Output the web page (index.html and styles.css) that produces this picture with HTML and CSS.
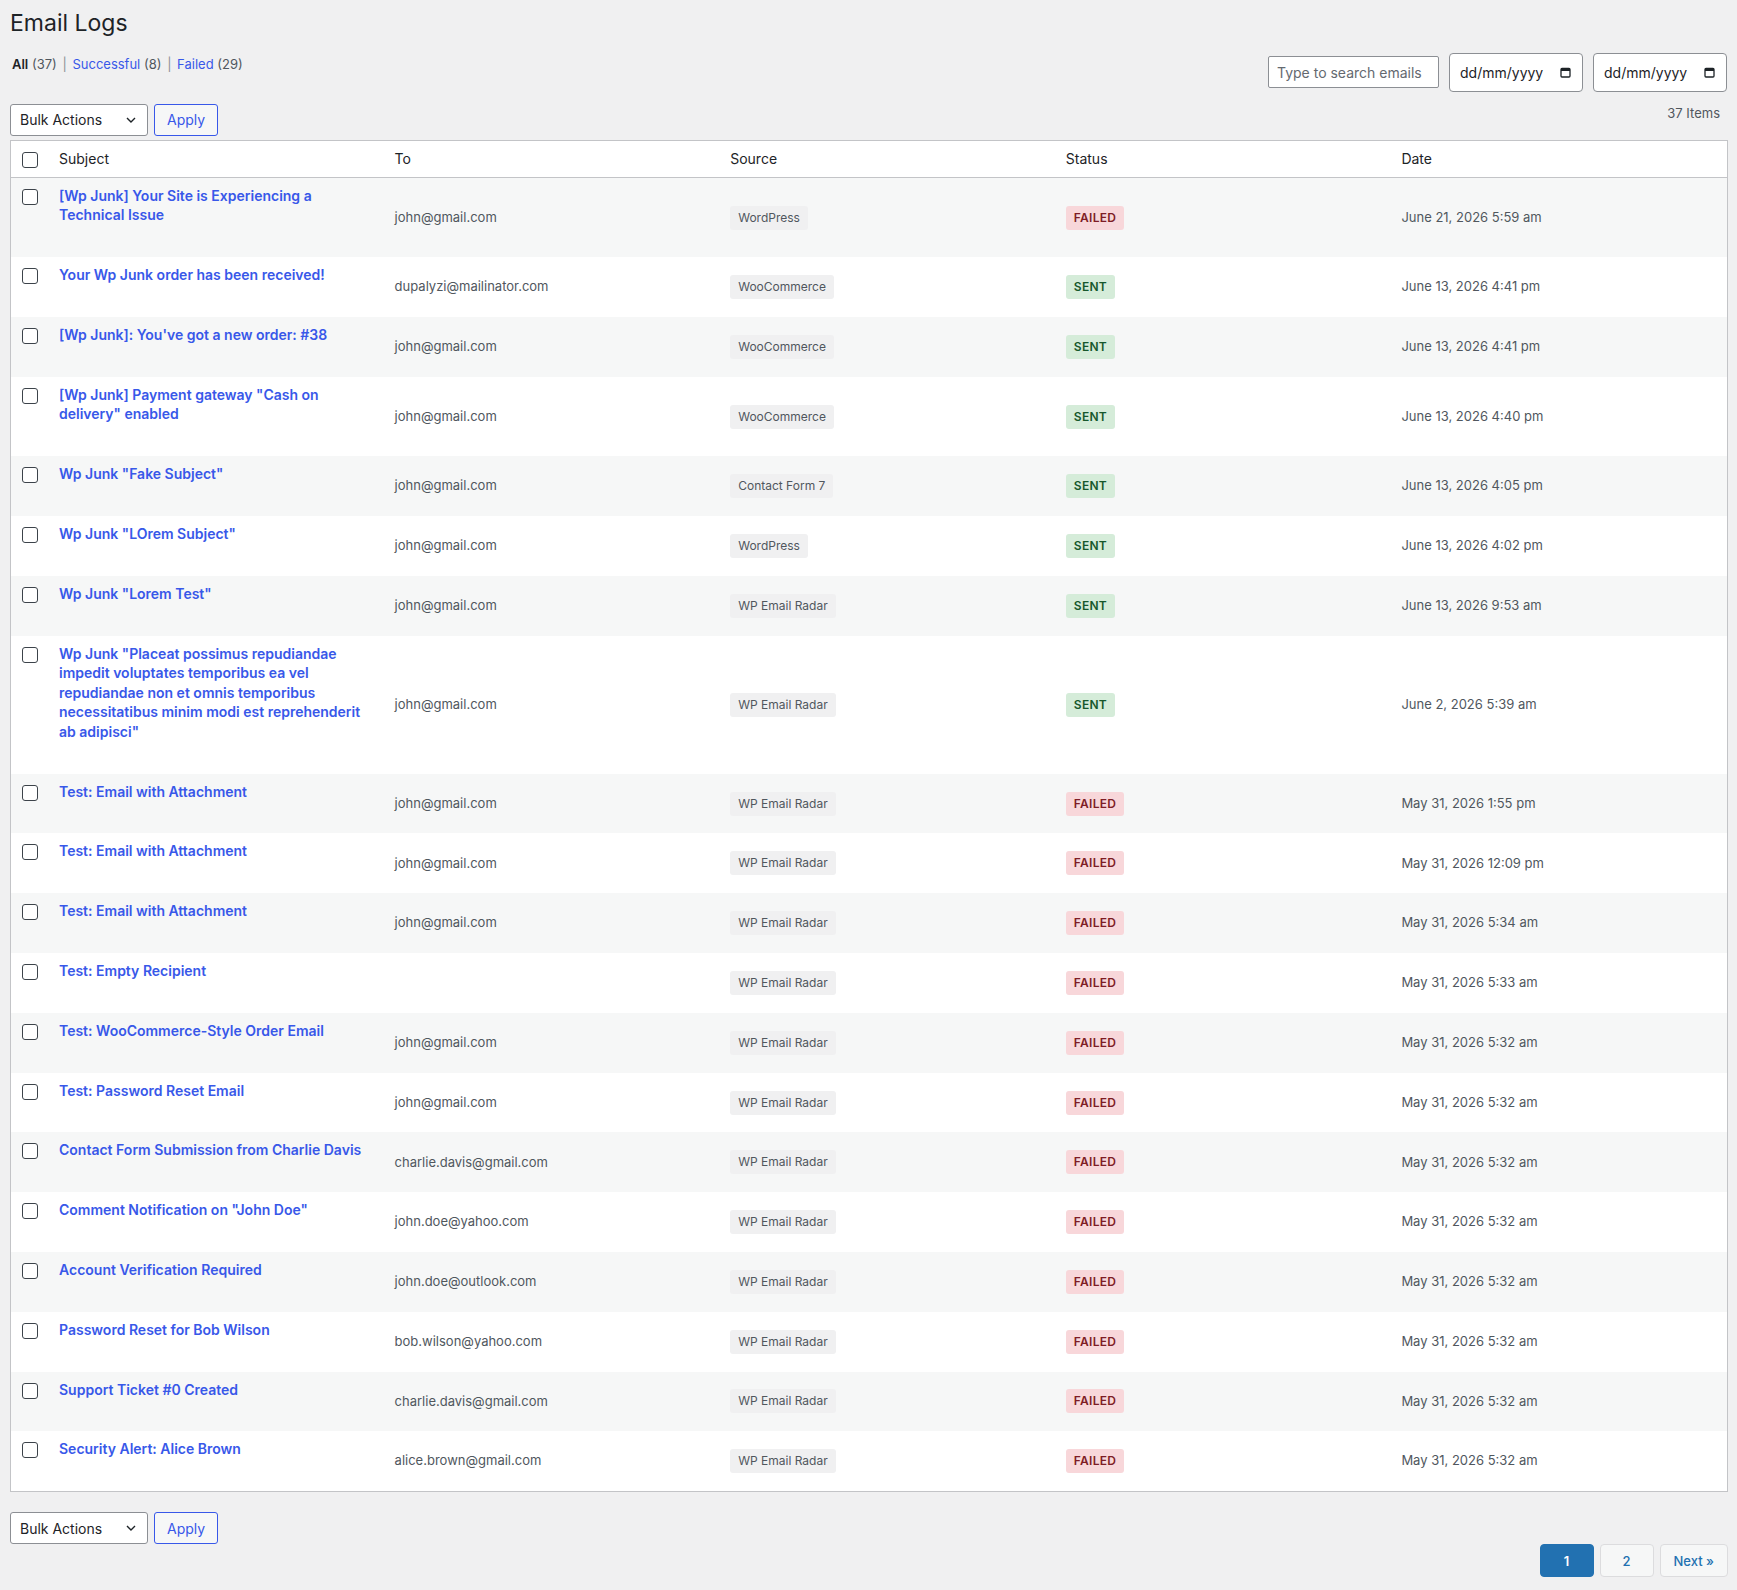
FILE: index.html
```html
<!DOCTYPE html>
<html lang="en">
<head>
    <meta charset="UTF-8">
    <meta name="viewport" content="width=device-width, initial-scale=1.0">
    <title>Email Logs</title>
    <link rel="stylesheet" href="styles.css">
</head>
<body>
    <div class="wrap">
        <h1>Email Logs</h1>

        <div class="top-bar">
            <div class="filters">
                <a class="current" href="#">All</a> <span class="count">(37)</span> <span class="sep">|</span>
                <a href="#">Successful</a> <span class="count">(8)</span> <span class="sep">|</span>
                <a href="#">Failed</a> <span class="count">(29)</span>
            </div>
            <div class="search-box">
                <input type="text" class="search-input" placeholder="Type to search emails">
                <div class="date-field">
                    <span>dd/mm/yyyy</span>
                    <svg width="11" height="11" viewBox="0 0 11 11"><rect x="1" y="1.5" width="9" height="8.5" rx="1" fill="none" stroke="#1d2327" stroke-width="1.3"/><rect x="1" y="1.5" width="9" height="2.5" fill="#1d2327"/></svg>
                </div>
                <div class="date-field">
                    <span>dd/mm/yyyy</span>
                    <svg width="11" height="11" viewBox="0 0 11 11"><rect x="1" y="1.5" width="9" height="8.5" rx="1" fill="none" stroke="#1d2327" stroke-width="1.3"/><rect x="1" y="1.5" width="9" height="2.5" fill="#1d2327"/></svg>
                </div>
            </div>
        </div>

        <div class="tablenav top">
            <div class="actions">
                <div class="bulk-select">
                    <span>Bulk Actions</span>
                    <svg width="10" height="6" viewBox="0 0 10 6"><path d="M1 1l4 4 4-4" fill="none" stroke="#1d2327" stroke-width="1.4"/></svg>
                </div>
                <button class="button">Apply</button>
            </div>
            <div class="displaying-num">37 Items</div>
        </div>

        <table class="logs">
            <thead>
                <tr>
                    <th class="check-column"><input type="checkbox"></th>
                    <th>Subject</th>
                    <th>To</th>
                    <th>Source</th>
                    <th>Status</th>
                    <th>Date</th>
                </tr>
            </thead>
            <tbody>
                <tr>
                    <td class="check-column"><input type="checkbox"></td>
                    <td class="subject"><a href="#">[Wp Junk] Your Site is Experiencing a Technical Issue</a></td>
                    <td>john@gmail.com</td>
                    <td><span class="source">WordPress</span></td>
                    <td><span class="status failed">Failed</span></td>
                    <td>June 21, 2026 5:59 am</td>
                </tr>
                <tr>
                    <td class="check-column"><input type="checkbox"></td>
                    <td class="subject"><a href="#">Your Wp Junk order has been received!</a></td>
                    <td>dupalyzi@mailinator.com</td>
                    <td><span class="source">WooCommerce</span></td>
                    <td><span class="status sent">Sent</span></td>
                    <td>June 13, 2026 4:41 pm</td>
                </tr>
                <tr>
                    <td class="check-column"><input type="checkbox"></td>
                    <td class="subject"><a href="#">[Wp Junk]: You've got a new order: #38</a></td>
                    <td>john@gmail.com</td>
                    <td><span class="source">WooCommerce</span></td>
                    <td><span class="status sent">Sent</span></td>
                    <td>June 13, 2026 4:41 pm</td>
                </tr>
                <tr>
                    <td class="check-column"><input type="checkbox"></td>
                    <td class="subject"><a href="#">[Wp Junk] Payment gateway "Cash on delivery" enabled</a></td>
                    <td>john@gmail.com</td>
                    <td><span class="source">WooCommerce</span></td>
                    <td><span class="status sent">Sent</span></td>
                    <td>June 13, 2026 4:40 pm</td>
                </tr>
                <tr>
                    <td class="check-column"><input type="checkbox"></td>
                    <td class="subject"><a href="#">Wp Junk "Fake Subject"</a></td>
                    <td>john@gmail.com</td>
                    <td><span class="source">Contact Form 7</span></td>
                    <td><span class="status sent">Sent</span></td>
                    <td>June 13, 2026 4:05 pm</td>
                </tr>
                <tr>
                    <td class="check-column"><input type="checkbox"></td>
                    <td class="subject"><a href="#">Wp Junk "LOrem Subject"</a></td>
                    <td>john@gmail.com</td>
                    <td><span class="source">WordPress</span></td>
                    <td><span class="status sent">Sent</span></td>
                    <td>June 13, 2026 4:02 pm</td>
                </tr>
                <tr>
                    <td class="check-column"><input type="checkbox"></td>
                    <td class="subject"><a href="#">Wp Junk "Lorem Test"</a></td>
                    <td>john@gmail.com</td>
                    <td><span class="source">WP Email Radar</span></td>
                    <td><span class="status sent">Sent</span></td>
                    <td>June 13, 2026 9:53 am</td>
                </tr>
                <tr>
                    <td class="check-column"><input type="checkbox"></td>
                    <td class="subject"><a href="#">Wp Junk "Placeat possimus repudiandae impedit voluptates temporibus ea vel repudiandae non et omnis temporibus necessitatibus minim modi est reprehenderit ab adipisci"</a></td>
                    <td>john@gmail.com</td>
                    <td><span class="source">WP Email Radar</span></td>
                    <td><span class="status sent">Sent</span></td>
                    <td>June 2, 2026 5:39 am</td>
                </tr>
                <tr>
                    <td class="check-column"><input type="checkbox"></td>
                    <td class="subject"><a href="#">Test: Email with Attachment</a></td>
                    <td>john@gmail.com</td>
                    <td><span class="source">WP Email Radar</span></td>
                    <td><span class="status failed">Failed</span></td>
                    <td>May 31, 2026 1:55 pm</td>
                </tr>
                <tr>
                    <td class="check-column"><input type="checkbox"></td>
                    <td class="subject"><a href="#">Test: Email with Attachment</a></td>
                    <td>john@gmail.com</td>
                    <td><span class="source">WP Email Radar</span></td>
                    <td><span class="status failed">Failed</span></td>
                    <td>May 31, 2026 12:09 pm</td>
                </tr>
                <tr>
                    <td class="check-column"><input type="checkbox"></td>
                    <td class="subject"><a href="#">Test: Email with Attachment</a></td>
                    <td>john@gmail.com</td>
                    <td><span class="source">WP Email Radar</span></td>
                    <td><span class="status failed">Failed</span></td>
                    <td>May 31, 2026 5:34 am</td>
                </tr>
                <tr>
                    <td class="check-column"><input type="checkbox"></td>
                    <td class="subject"><a href="#">Test: Empty Recipient</a></td>
                    <td></td>
                    <td><span class="source">WP Email Radar</span></td>
                    <td><span class="status failed">Failed</span></td>
                    <td>May 31, 2026 5:33 am</td>
                </tr>
                <tr>
                    <td class="check-column"><input type="checkbox"></td>
                    <td class="subject"><a href="#">Test: WooCommerce-Style Order Email</a></td>
                    <td>john@gmail.com</td>
                    <td><span class="source">WP Email Radar</span></td>
                    <td><span class="status failed">Failed</span></td>
                    <td>May 31, 2026 5:32 am</td>
                </tr>
                <tr>
                    <td class="check-column"><input type="checkbox"></td>
                    <td class="subject"><a href="#">Test: Password Reset Email</a></td>
                    <td>john@gmail.com</td>
                    <td><span class="source">WP Email Radar</span></td>
                    <td><span class="status failed">Failed</span></td>
                    <td>May 31, 2026 5:32 am</td>
                </tr>
                <tr>
                    <td class="check-column"><input type="checkbox"></td>
                    <td class="subject"><a href="#">Contact Form Submission from Charlie Davis</a></td>
                    <td>charlie.davis@gmail.com</td>
                    <td><span class="source">WP Email Radar</span></td>
                    <td><span class="status failed">Failed</span></td>
                    <td>May 31, 2026 5:32 am</td>
                </tr>
                <tr>
                    <td class="check-column"><input type="checkbox"></td>
                    <td class="subject"><a href="#">Comment Notification on "John Doe"</a></td>
                    <td>john.doe@yahoo.com</td>
                    <td><span class="source">WP Email Radar</span></td>
                    <td><span class="status failed">Failed</span></td>
                    <td>May 31, 2026 5:32 am</td>
                </tr>
                <tr>
                    <td class="check-column"><input type="checkbox"></td>
                    <td class="subject"><a href="#">Account Verification Required</a></td>
                    <td>john.doe@outlook.com</td>
                    <td><span class="source">WP Email Radar</span></td>
                    <td><span class="status failed">Failed</span></td>
                    <td>May 31, 2026 5:32 am</td>
                </tr>
                <tr>
                    <td class="check-column"><input type="checkbox"></td>
                    <td class="subject"><a href="#">Password Reset for Bob Wilson</a></td>
                    <td>bob.wilson@yahoo.com</td>
                    <td><span class="source">WP Email Radar</span></td>
                    <td><span class="status failed">Failed</span></td>
                    <td>May 31, 2026 5:32 am</td>
                </tr>
                <tr>
                    <td class="check-column"><input type="checkbox"></td>
                    <td class="subject"><a href="#">Support Ticket #0 Created</a></td>
                    <td>charlie.davis@gmail.com</td>
                    <td><span class="source">WP Email Radar</span></td>
                    <td><span class="status failed">Failed</span></td>
                    <td>May 31, 2026 5:32 am</td>
                </tr>
                <tr>
                    <td class="check-column"><input type="checkbox"></td>
                    <td class="subject"><a href="#">Security Alert: Alice Brown</a></td>
                    <td>alice.brown@gmail.com</td>
                    <td><span class="source">WP Email Radar</span></td>
                    <td><span class="status failed">Failed</span></td>
                    <td>May 31, 2026 5:32 am</td>
                </tr>
            </tbody>
        </table>

        <div class="tablenav bottom">
            <div class="actions">
                <div class="bulk-select">
                    <span>Bulk Actions</span>
                    <svg width="10" height="6" viewBox="0 0 10 6"><path d="M1 1l4 4 4-4" fill="none" stroke="#1d2327" stroke-width="1.4"/></svg>
                </div>
                <button class="button">Apply</button>
            </div>
        </div>

        <div class="pagination">
            <a class="page current" href="#">1</a>
            <a class="page" href="#">2</a>
            <a class="page" href="#">Next &raquo;</a>
        </div>
    </div>
</body>
</html>
```

FILE: styles.css
```css
* {
    box-sizing: border-box;
}

body {
    margin: 0;
    font-family: Inter, "Noto Sans", sans-serif;
    font-size: 13px;
    color: #3c434a;
    background: #f0f0f1;
}

a {
    color: #3858e9;
    text-decoration: none;
}

.wrap {
    padding: 0 9px 0 10px;
}

h1 {
    margin: 0;
    padding: 9px 0 4px;
    font-size: 23px;
    font-weight: 400;
    line-height: 1.3;
    color: #1d2327;
}

.top-bar {
    display: flex;
    justify-content: space-between;
    align-items: flex-start;
    margin-top: 10px;
}

.filters {
    margin: 1px 0 0 2px;
    line-height: 20px;
    color: #50575e;
}

.filters .current {
    color: #1d2327;
    font-weight: 600;
}

.filters .sep {
    margin: 0 2px;
    color: #8c8f94;
}

.search-box {
    display: flex;
    align-items: center;
    gap: 10px;
    margin-right: 1px;
}

.search-input {
    width: 171px;
    height: 32px;
    padding: 0 8px;
    border: 1px solid #8c8f94;
    border-radius: 2px;
    background: white;
    font-family: inherit;
    font-size: 14px;
    color: #1d2327;
}

.search-input::placeholder {
    color: #646970;
}

.date-field {
    width: 134px;
    height: 39px;
    display: flex;
    align-items: center;
    justify-content: space-between;
    padding: 0 11px 0 10px;
    border: 1px solid #8c8f94;
    border-radius: 4px;
    background: white;
    font-size: 14px;
    color: #1d2327;
}

.tablenav {
    display: flex;
    justify-content: space-between;
    align-items: flex-start;
}

.tablenav.top {
    margin: 12px 0 4px;
}

.tablenav.bottom {
    margin-top: 20px;
}

.actions {
    display: flex;
    gap: 6px;
}

.bulk-select {
    width: 138px;
    height: 32px;
    display: flex;
    align-items: center;
    justify-content: space-between;
    padding: 0 11px 0 9px;
    border: 1px solid #8c8f94;
    border-radius: 3px;
    background: white;
    font-size: 14px;
    color: #1d2327;
}

.button {
    height: 32px;
    padding: 0 12px;
    border: 1px solid #3858e9;
    border-radius: 3px;
    background: #f6f7f7;
    color: #3858e9;
    font-family: inherit;
    font-size: 14px;
    cursor: pointer;
}

.displaying-num {
    margin-right: 8px;
    line-height: 18px;
    color: #50575e;
}

.logs {
    width: 100%;
    table-layout: fixed;
    border-spacing: 0;
    border: 1px solid #c3c4c7;
    background: white;
}

.logs th {
    padding: 8px 10px;
    border-bottom: 1px solid #c3c4c7;
    text-align: left;
    font-size: 14px;
    font-weight: 400;
    line-height: 20px;
    color: #1d2327;
}

.logs td {
    padding: 8px 10px;
    vertical-align: middle;
    line-height: 1.5;
    color: #50575e;
}

.logs tbody tr:nth-child(odd) {
    background: #f6f7f7;
}

.logs .check-column {
    width: 38px;
    padding: 11px 0 0 11px;
    vertical-align: top;
}

.check-column input {
    appearance: none;
    display: block;
    width: 16px;
    height: 16px;
    margin: 0;
    border: 1px solid #3c434a;
    border-radius: 3px;
    background: white;
}

.logs td.subject {
    padding-bottom: 32.2px;
    vertical-align: top;
    font-size: 14px;
    font-weight: 600;
    line-height: 1.4;
}

.source {
    display: inline-block;
    padding: 4px 8px;
    border-radius: 3px;
    background: #f0f0f1;
    font-size: 12px;
    line-height: 16px;
    color: #50575e;
}

.status {
    display: inline-block;
    padding: 4px 8px;
    border-radius: 3px;
    font-size: 12px;
    font-weight: 600;
    line-height: 16px;
    letter-spacing: 0.3px;
    text-transform: uppercase;
}

.status.failed {
    background: #f8d7da;
    color: #7e1d26;
}

.status.sent {
    background: #d5ecd9;
    color: #17582c;
}

.pagination {
    display: flex;
    justify-content: flex-end;
    gap: 6px;
    margin-bottom: 14px;
}

.page {
    min-width: 54px;
    height: 33px;
    display: inline-flex;
    align-items: center;
    justify-content: center;
    padding: 0 13px;
    border: 1px solid #dcdcde;
    border-radius: 4px;
    background: #f6f7f7;
    color: #2271b1;
    font-size: 13px;
    font-weight: 500;
}

.page.current {
    border-color: #2271b1;
    background: #2271b1;
    color: white;
    font-weight: 600;
}
```
